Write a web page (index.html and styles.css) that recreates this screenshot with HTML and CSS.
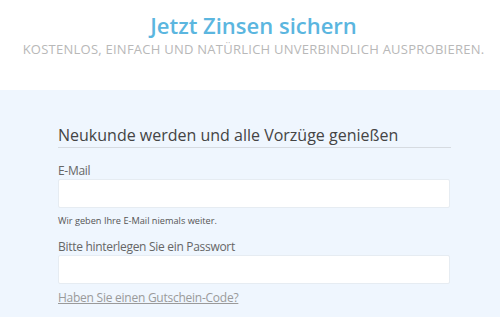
FILE: index.html
```html
<!DOCTYPE html>
<html lang="de">
<head>
<meta charset="utf-8">
<link rel="stylesheet" href="styles.css">
</head>
<body>
<header class="hero">
  <h1 class="hero-title">Jetzt Zinsen sichern</h1>
  <p class="hero-sub">Kostenlos, einfach und natürlich unverbindlich ausprobieren.</p>
</header>
<main class="panel">
  <form class="form">
    <h2 class="form-title">Neukunde werden und alle Vorzüge genießen</h2>
    <label class="label" for="email">E-Mail</label>
    <input class="input" id="email" type="email">
    <p class="hint">Wir geben Ihre E-Mail niemals weiter.</p>
    <label class="label" for="pw">Bitte hinterlegen Sie ein Passwort</label>
    <input class="input" id="pw" type="password">
    <a class="voucher" href="#">Haben Sie einen Gutschein-Code?</a>
  </form>
</main>
</body>
</html>
```
FILE: styles.css
```css
* { box-sizing: border-box; }
html, body { margin: 0; padding: 0; }
body {
  font-family: "Open Sans", "Liberation Sans", sans-serif;
  background: #fff;
  height: 317px;
  overflow: hidden;
}
.hero {
  height: 90px;
  padding: 10px 0 0 7px;
  text-align: center;
}
.hero-title {
  margin: 0;
  font-size: 22px;
  font-weight: 600;
  color: #5bb6df;
  line-height: 30px;
}
.hero-sub {
  margin: 0;
  font-size: 13px;
  font-weight: 400;
  letter-spacing: 0.25px;
  text-transform: uppercase;
  color: #b8b8b8;
  line-height: 18px;
}
.panel {
  background: #eff6fe;
  height: 227px;
  padding: 35px 0 0 58px;
}
.form {
  width: 393px;
  display: flex;
  flex-direction: column;
}
.form-title {
  margin: 0;
  font-size: 16px;
  font-weight: 400;
  color: #444;
  line-height: 20px;
  padding-bottom: 2px;
  border-bottom: 1px solid #d6dbe1;
  margin-bottom: 15px;
}
.label {
  font-size: 12px;
  letter-spacing: -0.3px;
  color: #666;
  line-height: 16px;
}
.input {
  width: 392px;
  height: 29px;
  border: 1px solid #e6ecf2;
  background: #fff;
  border-radius: 2px;
}
.hint {
  margin: 7px 0 12px;
  font-size: 9.2px;
  color: #555;
  line-height: 12px;
}
.voucher {
  margin-top: 5px;
  font-size: 12px;
  letter-spacing: -0.25px;
  color: #9a9a9a;
  line-height: 18px;
  align-self: flex-start;
}
```
